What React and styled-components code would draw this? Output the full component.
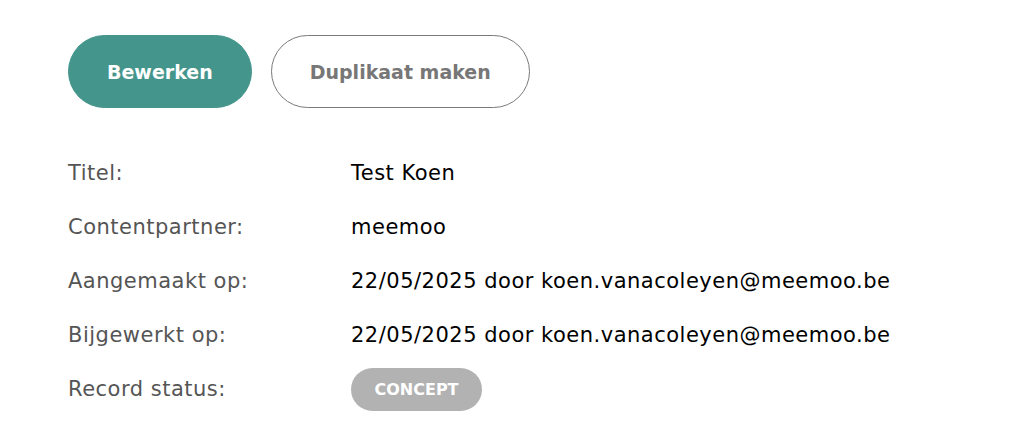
import styled, { createGlobalStyle } from "styled-components";

const GlobalStyle = createGlobalStyle`
    body {
        margin: 0;
        background: #ffffff;
        font-family: "DejaVu Sans", "Noto Sans", sans-serif;
    }
`;

const Page = styled.div`
    padding: 35px 68px;
`;
const Actions = styled.div`
    display: flex;
    gap: 19px;
    margin-bottom: 38px;
`;
const Button = styled.button`
    height: 73px;
    padding: 0 38px;
    border-radius: 37px;
    font-family: inherit;
    font-size: 19px;
    font-weight: 700;
    cursor: pointer;
    border: 1px solid ${props => (props.$primary ? "#44958c" : "#7a7a7a")};
    background: ${props => (props.$primary ? "#44958c" : "#ffffff")};
    color: ${props => (props.$primary ? "#ffffff" : "#777777")};
`;
const Details = styled.div`
    display: grid;
    grid-template-columns: 283px auto;
    grid-auto-rows: 54px;
    align-items: center;
`;
const Label = styled.div`
    font-size: 21px;
    letter-spacing: 0.5px;
    color: #555555;
`;
const Value = styled.div`
    font-size: 21px;
    letter-spacing: 0.5px;
    color: #000000;
`;
const Badge = styled.span`
    display: inline-flex;
    align-items: center;
    justify-content: center;
    width: 131px;
    height: 43px;
    border-radius: 22px;
    background: #b2b2b2;
    color: #ffffff;
    font-size: 16px;
    font-weight: 700;
`;

const rows = [
    ["Titel:", "Test Koen"],
    ["Contentpartner:", "meemoo"],
    ["Aangemaakt op:", "22/05/2025 door koen.vanacoleyen@meemoo.be"],
    ["Bijgewerkt op:", "22/05/2025 door koen.vanacoleyen@meemoo.be"],
];

function App() {
    return (
        <Page>
            <GlobalStyle />
            <Actions>
                <Button $primary>Bewerken</Button>
                <Button>Duplikaat maken</Button>
            </Actions>
            <Details>
                {rows.map(([label, value]) => (
                    <>
                        <Label key={label}>{label}</Label>
                        <Value>{value}</Value>
                    </>
                ))}
                <Label>Record status:</Label>
                <div>
                    <Badge>CONCEPT</Badge>
                </div>
            </Details>
        </Page>
    );
}

export default App;
